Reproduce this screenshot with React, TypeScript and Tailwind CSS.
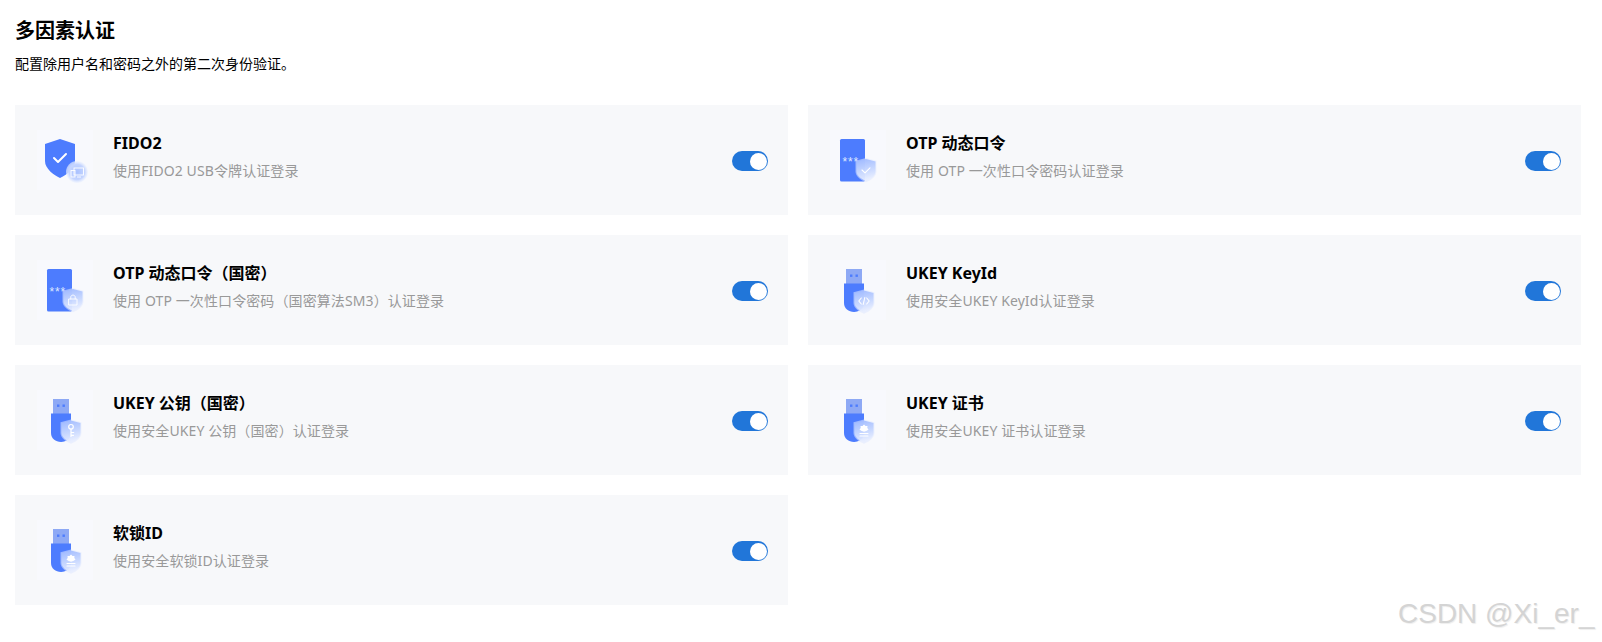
import React from "react";

type Kind = "fido" | "otp-check" | "otp-lock" | "usb-code" | "usb-key" | "usb-cert" | "usb-soft";

const items: { title: string; desc: string; icon: Kind }[] = [
  { title: "FIDO2", desc: "使用FIDO2 USB令牌认证登录", icon: "fido" },
  { title: "OTP 动态口令", desc: "使用 OTP 一次性口令密码认证登录", icon: "otp-check" },
  { title: "OTP 动态口令（国密）", desc: "使用 OTP 一次性口令密码（国密算法SM3）认证登录", icon: "otp-lock" },
  { title: "UKEY KeyId", desc: "使用安全UKEY KeyId认证登录", icon: "usb-code" },
  { title: "UKEY 公钥（国密）", desc: "使用安全UKEY 公钥（国密）认证登录", icon: "usb-key" },
  { title: "UKEY 证书", desc: "使用安全UKEY 证书认证登录", icon: "usb-cert" },
  { title: "软锁ID", desc: "使用安全软锁ID认证登录", icon: "usb-soft" },
];

const SHIELD = "M0 2.5 L9.5 0 L19 2.5 V12 C19 17 14 20 9.5 22 C5 20 0 17 0 12 Z";

function Glyph({ kind }: { kind: Kind }) {
  const line = { fill: "none", stroke: "#fff", strokeWidth: 1.1, strokeLinecap: "round" as const, strokeLinejoin: "round" as const };
  if (kind === "otp-check") return <path d="M5.5 11 L8.5 13.8 L13.5 8.8" {...line} />;
  if (kind === "otp-lock")
    return (
      <g {...line} strokeWidth={0.9}>
        <rect x="5.5" y="10" width="8" height="6" />
        <path d="M7.3 10 V8 C7.3 5.5 11.7 5.5 11.7 8 V10" />
      </g>
    );
  if (kind === "usb-code")
    return (
      <g {...line}>
        <path d="M6.8 7.5 L4.3 10.5 L6.8 13.5" />
        <path d="M12.2 7.5 L14.7 10.5 L12.2 13.5" />
        <path d="M10.3 7 L8.7 14" />
      </g>
    );
  if (kind === "usb-key")
    return (
      <g {...line} strokeWidth={1.2}>
        <circle cx="9.5" cy="6.3" r="2.3" />
        <path d="M9.5 8.6 V16 M9.5 12 H12.2 M9.5 14.8 H12" />
      </g>
    );
  return (
    <g>
      <path d="M9.5 4 L11 5.5 L13 5.6 L12.8 7.6 L14 9 L12.3 10.2 L9.5 11.2 L6.7 10.2 L5 9 L6.2 7.6 L6 5.6 L8 5.5 Z" fill="#fff" />
      <path d="M5.5 13 H13.5 M5.5 15.5 H13.5" {...line} />
    </g>
  );
}

function GlassShield({ x, y, kind }: { x: number; y: number; kind: Kind }) {
  return (
    <g transform={`translate(${x} ${y})`}>
      <path d={SHIELD} fill="#dfe8ff" opacity="0.55" transform="translate(-1 -1) scale(1.1)" />
      <path d={SHIELD} fill={`url(#glass-${kind})`} />
      <Glyph kind={kind} />
    </g>
  );
}

function AuthIcon({ kind }: { kind: Kind }) {
  return (
    <svg width="70" height="70" viewBox="0 0 70 70" className="shrink-0">
      <defs>
        <linearGradient id={`glass-${kind}`} x1="0" y1="0" x2="0.2" y2="1">
          <stop offset="0" stopColor="#9db8ff" stopOpacity="0.95" />
          <stop offset="0.55" stopColor="#c4d5ff" stopOpacity="0.95" />
          <stop offset="1" stopColor="#e8eeff" stopOpacity="0.9" />
        </linearGradient>
        <radialGradient id={`halo-${kind}`}>
          <stop offset="0" stopColor="#a9c1ff" />
          <stop offset="0.7" stopColor="#c5d5ff" />
          <stop offset="1" stopColor="#eef3ff" stopOpacity="0.6" />
        </radialGradient>
      </defs>
      <rect x="7" y="5" width="56" height="60" fill="#f8f9fd" />
      {kind === "fido" && (
        <g>
          <path d="M15 19 L30 14 L45 19 V36 C45 44 36 50 30 53 C24 50 15 44 15 36 Z" fill="#4d7cfe" />
          <path d="M24 33 L28 37 L36 29" fill="none" stroke="#fff" strokeWidth="2" strokeLinecap="round" strokeLinejoin="round" />
          <circle cx="47" cy="47" r="11" fill={`url(#halo-${kind})`} />
          <g fill="none" stroke="#fff" strokeWidth="0.9">
            <rect x="44" y="43" width="9.5" height="7" />
            <rect x="41" y="45.5" width="4" height="6.5" />
            <path d="M47 52 H51" />
          </g>
        </g>
      )}
      {(kind === "otp-check" || kind === "otp-lock") && (
        <g>
          <rect x="17" y="14" width="25" height="42.5" rx="1.5" fill="#4d7cfe" />
          <text x="19.5" y="41" fill="#dfe8ff" fontSize="12" fontFamily="'Liberation Sans', sans-serif" letterSpacing="0.8">***</text>
          <GlassShield x={33.5} y={34} kind={kind} />
        </g>
      )}
      {kind.startsWith("usb") && (
        <g>
          <rect x="23" y="14" width="16" height="15" fill="#8ea9f5" />
          <rect x="27" y="19.5" width="2.4" height="2.4" fill="#4d7cfe" />
          <rect x="32.5" y="19.5" width="2.4" height="2.4" fill="#4d7cfe" />
          <path d="M21 28.5 H41 V48 C41 53.5 36.5 57 31 57 C25.5 57 21 53.5 21 48 Z" fill="#4d7cfe" />
          <GlassShield x={31.5} y={35.5} kind={kind} />
        </g>
      )}
    </svg>
  );
}

function Toggle() {
  return (
    <div className="mt-[2px] flex h-5 w-9 shrink-0 items-center justify-end rounded-full bg-[#2176d9] pr-[1.5px]">
      <div className="h-[17px] w-[17px] rounded-full bg-white" />
    </div>
  );
}

export default function App() {
  return (
    <div
      className="relative h-[642px] w-[1602px] overflow-hidden bg-white pr-[21px] pl-[15px] text-black"
      style={{ fontFamily: "'Noto Sans', 'Noto Sans CJK SC', sans-serif" }}
    >
      <h1 className="pt-[16px] text-[20px] leading-[30px] font-bold">多因素认证</h1>
      <p className="mt-[8px] text-[14px] leading-[20px]">配置除用户名和密码之外的第二次身份验证。</p>
      <div className="mt-[31px] grid grid-cols-2 gap-5">
        {items.map((item) => (
          <div key={item.title} className="flex h-[110px] items-center bg-[#f7f8fa] pr-5 pl-[15px]">
            <AuthIcon kind={item.icon} />
            <div className="ml-[13px] flex-1 pb-[8px]">
              <div className="text-[16px] leading-[24px] font-bold">{item.title}</div>
              <div className="mt-[6px] text-[14px] leading-[20px] tracking-[0.1px] text-[#999999]">{item.desc}</div>
            </div>
            <Toggle />
          </div>
        ))}
      </div>
      <div
        className="absolute top-[594px] left-[1398px] text-[28px] leading-[40px] whitespace-nowrap text-[#d4d4d4] [text-shadow:1px_1px_1px_#eeeeee]"
        style={{ fontFamily: "'Liberation Sans', sans-serif" }}
      >
        CSDN @Xi_er_
      </div>
    </div>
  );
}
